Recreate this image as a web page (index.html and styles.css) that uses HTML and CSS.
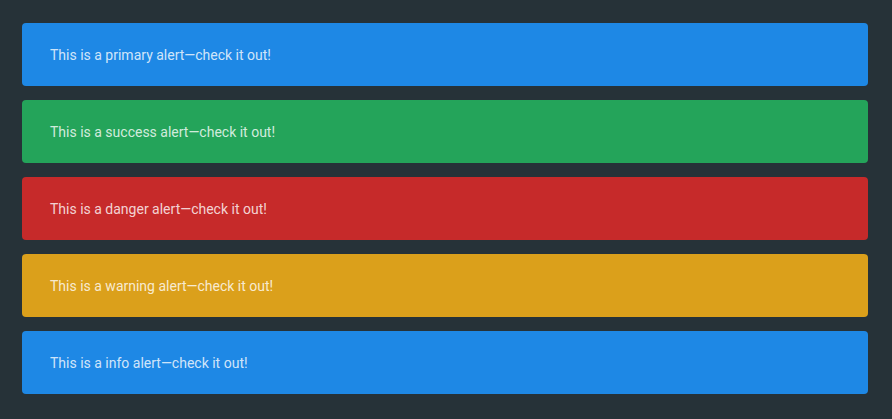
FILE: index.html
```html
<!DOCTYPE html>
<html lang="en">
<head>
<meta charset="utf-8">
<title>Alerts</title>
<link rel="stylesheet" href="styles.css">
</head>
<body>
<div class="alerts">
  <div class="alert alert-primary">This is a primary alert—check it out!</div>
  <div class="alert alert-success">This is a success alert—check it out!</div>
  <div class="alert alert-danger">This is a danger alert—check it out!</div>
  <div class="alert alert-warning">This is a warning alert—check it out!</div>
  <div class="alert alert-info">This is a info alert—check it out!</div>
</div>
</body>
</html>
```
FILE: styles.css
```css
html, body {
  margin: 0;
  background: #263238;
}
body {
  padding: 23px 24px 25px 22px;
  font-family: Roboto, "Noto Sans", sans-serif;
  font-size: 14px;
}
.alerts {
  display: flex;
  flex-direction: column;
  gap: 14px;
}
.alert {
  height: 63px;
  box-sizing: border-box;
  display: flex;
  align-items: center;
  padding: 0 28px;
  border-radius: 4px;
  color: rgba(255, 255, 255, 0.8);
}
.alert-primary { background: #1e88e5; }
.alert-success { background: #24a45a; }
.alert-danger { background: #c62a2a; }
.alert-warning { background: #dba01b; }
.alert-info { background: #1e88e5; }
```
